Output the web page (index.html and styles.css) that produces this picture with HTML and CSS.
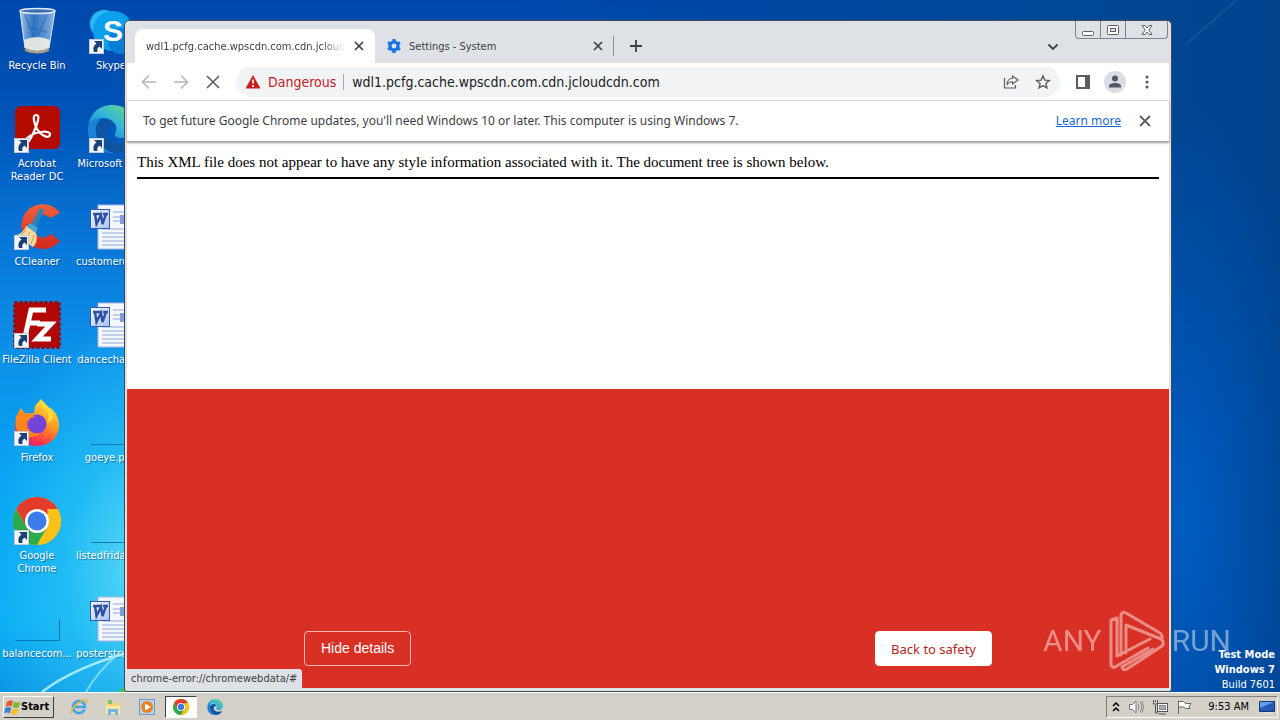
FILE: index.html
```html
<!DOCTYPE html>
<html lang="en">
<head>
    <meta charset="UTF-8">
    <meta name="viewport" content="width=device-width, initial-scale=1.0">
    <title>Desktop</title>
    <link rel="stylesheet" href="styles.css">
</head>
<body>
    <!-- Shared icon parts -->
    <svg class="defs" width="0" height="0" aria-hidden="true">
        <defs>
            <linearGradient id="g-bin" x1="0" x2="1"><stop offset="0" stop-color="#c9dff2" stop-opacity=".85"/><stop offset=".4" stop-color="#5f9cd8" stop-opacity=".5"/><stop offset="1" stop-color="#b8d3ee" stop-opacity=".8"/></linearGradient>
            <linearGradient id="g-edge" x1="0" y1="1" x2="1" y2="0"><stop offset="0" stop-color="#1573c4"/><stop offset=".5" stop-color="#30b4dd"/><stop offset="1" stop-color="#6ee07a"/></linearGradient>
            <linearGradient id="g-fox" x1=".8" y1="0" x2=".3" y2="1"><stop offset="0" stop-color="#fff04a"/><stop offset=".45" stop-color="#ff9a1f"/><stop offset=".8" stop-color="#ff3b47"/><stop offset="1" stop-color="#e3177f"/></linearGradient>
            <linearGradient id="g-word" x1="0" y1="0" x2="1" y2="1"><stop offset="0" stop-color="#f4f8ff"/><stop offset="1" stop-color="#a9c2ee"/></linearGradient>
            <linearGradient id="g-cc" x1="0" y1="0" x2="0" y2="1"><stop offset="0" stop-color="#f0603a"/><stop offset="1" stop-color="#d2281c"/></linearGradient>
            <symbol id="shortcut" viewBox="0 0 15 15">
                <rect x=".5" y=".5" width="14" height="14" fill="#f4f6f8" stroke="#c3cad2"/>
                <path d="M5 2h8v8l-2.500-2.500C8 9 8 11 8.500 13H5C3.500 9 5 6.500 7.500 4.500z" fill="#1a4078"/>
            </symbol>
            <symbol id="word" viewBox="0 0 48 48">
                <path d="M11 2h33v44H11z" fill="#f4f7fd" stroke="#a5b7dc"/>
                <path d="M26 9h14M26 14h14M26 18h14M15 26h27M15 30h27M15 34h27M15 38h27M15 42h27" stroke="#8fa8dc"/>
                <rect x="33" y="12" width="9" height="9" fill="#7f9edb"/>
                <rect x="3.500" y="6.500" width="19" height="19" fill="url(#g-word)" stroke="#3458ab"/>
                <path d="M6 11h5M10 11h5M16 11h5M8 11l1.500 10L14 12l1.500 9L19 11" fill="none" stroke="#2b50a4" stroke-width="2.400"/>
            </symbol>
            <symbol id="chrome" viewBox="0 0 48 48">
                <circle cx="24" cy="24" r="24" fill="#fbc116"/>
                <path d="M24 24 44.800 12A24 24 0 0 0 3.200 12L13.600 30z" fill="#e33b2e"/>
                <path d="M3.200 12A24 24 0 0 0 24 48L34.400 30 24 24l-10.400 6z" fill="#2da94f"/>
                <path d="M24 48 34.400 30V12h10.400A24 24 0 0 1 24 48z" fill="#fbc116"/>
                <circle cx="24" cy="24" r="12" fill="#fff"/>
                <circle cx="24" cy="24" r="9.500" fill="#3b7ded"/>
            </symbol>
            <symbol id="edge" viewBox="0 0 48 48">
                <path d="M1 23C2 9 12 0 25 0c14 0 23 9 23 20 0 8-6 13-13 13-5 0-8-2-7-5 1-2 2-4 1-7-2-5-7-8-13-8C8 13 2 17 1 23z" fill="url(#g-edge)"/>
                <path d="M1 23c1-6 7-10 15-10-5 2-8 8-7 15 1 10 10 18 20 20C12 50 0 39 1 23z" fill="#1b83d6"/>
                <path d="M9 28c-1-7 3-12 9-13 5 0 9 2 10 6-5-1-8 3-8 7 0 8 11 13 22 9 2-1 3 0 2 2-4 6-10 9-17 9C17 46 10 37 9 28z" fill="#0d55a3"/>
            </symbol>
            <symbol id="close" viewBox="0 0 16 16"><path d="M4 4l8 8M12 4l-8 8" stroke="currentColor" stroke-width="1.700"/></symbol>
        </defs>
    </svg>

    <main class="desktop">
        <!-- Wallpaper light streaks -->
        <svg class="streaks" viewBox="0 0 130 110" aria-hidden="true">
            <path d="M42 110C65 92 95 80 130 70" stroke="#b7f3ff" stroke-width="2.500" fill="none" opacity=".85"/>
            <path d="M86 110C94 96 104 84 118 72" stroke="#9feaff" stroke-width="2" fill="none" opacity=".7"/>
            <path d="M117 110l13-10v10z" fill="#3fc46a"/>
        </svg>
        <svg class="streaks top" viewBox="0 0 130 110" aria-hidden="true">
            <path d="M35 45L90-3" stroke="#5b8fc4" stroke-width="2" opacity=".2"/>
        </svg>

        <!-- Desktop icons -->
        <div class="shortcuts">
            <div class="shortcut">
                <svg viewBox="0 0 48 48"><path d="M7 4l5 37q12 7 24 0l6-37z" fill="url(#g-bin)"/><path d="M11 33q13-6 26 0l-1 8q-12 6-24 0z" fill="#f1eee6" opacity=".9"/><path d="M12 8l9 22M34 8l-9 20M14 20l20 5" stroke="#245fa8" opacity=".4" fill="none" stroke-width="2"/><path d="M7 4l5 37M42 4l-6 37" stroke="#d8e8f8" fill="none"/><path d="M12 41q12 6 24 0v3q-12 5-24 0z" fill="#b49f86"/><ellipse cx="24.500" cy="4" rx="17.500" ry="2.500" fill="#3b70b4" stroke="#dfeaf5" stroke-width="1.500"/></svg>
                <span>Recycle Bin</span>
            </div>
            <div class="shortcut">
                <svg viewBox="0 0 48 48"><circle cx="17" cy="17" r="14" fill="#28b8f2"/><circle cx="26" cy="24" r="20" fill="#0aa0ec"/><circle cx="34" cy="34" r="13" fill="#087ed6"/><text x="26" y="34" class="skype-letter">S</text><use href="#shortcut" x="2" y="32" width="15" height="15"/></svg>
                <span>Skype</span>
            </div>
            <div class="shortcut">
                <svg viewBox="0 0 48 48"><rect x="2" y="1" width="45" height="43" rx="6" fill="#b30b00"/><path d="M23 10c-4 0-2 8 1 14 4 7 12 10 13 6 1-5-13-4-20 1-6 4-9 9-6 9 5 0 10-13 13-21 2-6 2-9-1-9z" fill="none" stroke="#fff" stroke-width="2.200"/><use href="#shortcut" x="1" y="33" width="15" height="15"/></svg>
                <span>Acrobat Reader DC</span>
            </div>
            <div class="shortcut nowrap">
                <svg viewBox="0 0 48 48"><use href="#edge" width="48" height="48"/><use href="#shortcut" x="2" y="33" width="15" height="15"/></svg>
                <span>Microsoft Edg</span>
            </div>
            <div class="shortcut">
                <svg viewBox="0 0 48 48"><path d="M47 10C40-1 22-2 13 9c-8 10-5 27 6 34 9 5 20 4 28-5l-9-7c-4 4-10 5-14 1-5-5-5-13 0-18 4-3 9-3 13 1z" fill="url(#g-cc)"/><path d="M27 5l4 2-8 18-5-3z" fill="#2d83b8"/><path d="M17 20l8 5-2 5-10-6z" fill="#47a4d5"/><path d="M13 23l10 7c2 6 0 12-3 14L3 32c5-1 8-4 10-9z" fill="#f2d9a0"/><path d="M8 32l5-5M13 37l4-8M18 41l3-9" stroke="#c99d54"/><use href="#shortcut" x="1" y="32" width="15" height="15"/></svg>
                <span>CCleaner</span>
            </div>
            <div class="shortcut nowrap">
                <svg viewBox="0 0 48 48"><use href="#word" width="48" height="48"/></svg>
                <span>customercol...</span>
            </div>
            <div class="shortcut">
                <svg viewBox="0 0 48 48"><rect x="1.500" y="1.500" width="45" height="45" fill="#b20606" stroke="#8d0d14" stroke-width="3" stroke-dasharray="3 2"/><path d="M12 36l6-27h15M14 22h13M24 23h14L24 38h14" fill="none" stroke="#fff" stroke-width="5"/><use href="#shortcut" x="1" y="32" width="15" height="15"/></svg>
                <span>FileZilla Client</span>
            </div>
            <div class="shortcut nowrap">
                <svg viewBox="0 0 48 48"><use href="#word" width="48" height="48"/></svg>
                <span>dancechard...</span>
            </div>
            <div class="shortcut">
                <svg viewBox="0 0 48 48"><path d="M8 9l4 6 9-1 1-7 6-7 4 7c9 2 14 10 14 19 0 12-9 21-22 21S2 38 2 27C2 20 4 14 8 9z" fill="url(#g-fox)"/><circle cx="24" cy="25" r="9.500" fill="#7443d7"/><path d="M3 17c7-5 16-4 19 1-6 0-5 4-9 5 0 9 8 13 15 11-8 7-21 5-25-5z" fill="#ff8a1c" opacity=".9"/><path d="M28 0c-1 5 1 7 5 10 4 4 3 10 1 14 6-2 7-7 5-12z" fill="#ffdc38"/><use href="#shortcut" x="1" y="32" width="15" height="15"/></svg>
                <span>Firefox</span>
            </div>
            <div class="shortcut nowrap">
                <svg viewBox="0 0 48 48"><path d="M4 45.500h44" stroke="#1378ab"/></svg>
                <span>goeye.png</span>
            </div>
            <div class="shortcut">
                <svg viewBox="0 0 48 48"><use href="#chrome" width="48" height="48"/><use href="#shortcut" x="1" y="33" width="15" height="15"/></svg>
                <span>Google Chrome</span>
            </div>
            <div class="shortcut nowrap">
                <svg viewBox="0 0 48 48"><path d="M4 45.500h44" stroke="#1378ab"/></svg>
                <span>listedfridays...</span>
            </div>
            <div class="shortcut nowrap">
                <svg viewBox="0 0 48 48"><path d="M2 45.500h44.500V24" stroke="#0877b8" fill="none"/></svg>
                <span>balancecom...</span>
            </div>
            <div class="shortcut nowrap">
                <svg viewBox="0 0 48 48"><use href="#word" width="48" height="48"/></svg>
                <span>posterstrust...</span>
            </div>
        </div>

        <!-- Browser window -->
        <section class="window">
            <div class="title-bar">
                <div class="tab active">
                    <span class="tab-title">wdl1.pcfg.cache.wpscdn.com.cdn.jcloudcdn.com</span>
                    <button class="icon-button small" aria-label="Close tab"><svg width="16" height="16"><use href="#close"/></svg></button>
                </div>
                <div class="tab">
                    <svg class="favicon" viewBox="0 0 16 16"><circle cx="8" cy="8" r="4" fill="none" stroke="#1a73e8" stroke-width="3.200"/><path d="M8 1v3M8 12v3M2 4.500l2.500 1.500M11.500 10l2.500 1.500M2 11.500L4.500 10M11.500 6L14 4.500" stroke="#1a73e8" stroke-width="3.200"/></svg>
                    <span class="tab-title">Settings - System</span>
                    <button class="icon-button small" aria-label="Close tab"><svg width="16" height="16"><use href="#close"/></svg></button>
                </div>
                <button class="icon-button new-tab" aria-label="New tab"><svg width="16" height="16"><path d="M8 2v12M2 8h12" stroke="currentColor" stroke-width="1.800"/></svg></button>
                <button class="icon-button tab-search" aria-label="Search tabs"><svg width="16" height="16"><path d="M3.500 5.500L8 10l4.500-4.500" fill="none" stroke="currentColor" stroke-width="1.800"/></svg></button>
                <div class="window-buttons">
                    <button aria-label="Minimize"><svg width="14" height="14"><rect x="1.500" y="8.500" width="11" height="4" rx="1" fill="#fff" stroke="#5b6068"/></svg></button>
                    <button aria-label="Restore"><svg width="14" height="14"><rect x="1.500" y="2.500" width="11" height="9" rx="1" fill="#fff" stroke="#5b6068"/><rect x="4.500" y="5.500" width="5" height="3" fill="#dee1e6" stroke="#5b6068"/></svg></button>
                    <button class="wide" aria-label="Close"><svg width="14" height="14"><path d="M2 2.500h3L7 5l2-2.500h3L8.800 7l3.200 4.500H9L7 9l-2 2.500H2L5.200 7z" fill="#fff" stroke="#5b6068"/></svg></button>
                </div>
            </div>

            <div class="toolbar">
                <button class="icon-button faded" aria-label="Back"><svg width="16" height="16"><path d="M15 8H2M8 1.500L1.500 8 8 14.500" fill="none" stroke="currentColor" stroke-width="1.600"/></svg></button>
                <button class="icon-button faded" aria-label="Forward"><svg width="16" height="16"><path d="M1 8h13M8 1.500L14.500 8 8 14.500" fill="none" stroke="currentColor" stroke-width="1.600"/></svg></button>
                <button class="icon-button" aria-label="Stop"><svg width="16" height="16"><path d="M2 2l12 12M14 2L2 14" stroke="currentColor" stroke-width="1.600"/></svg></button>
                <div class="address">
                    <svg width="16" height="16"><path d="M8 1l7.500 13.500H.5z" fill="#c5221f"/><path d="M8 5.500v4M8 11v2" stroke="#fff" stroke-width="1.600"/></svg>
                    <label class="danger" for="url">Dangerous</label>
                    <input id="url" type="text" value="wdl1.pcfg.cache.wpscdn.com.cdn.jcloudcdn.com">
                    <button class="icon-button" aria-label="Share"><svg width="16" height="16" fill="none" stroke="currentColor"><path d="M1.500 4v10h11v-3" stroke-width="1.200"/><path d="M9.500 2L15 6l-5.500 4V7.800C7 7.800 5 8.800 4 11c0-4 2.500-6.500 5.500-6.800z" stroke-width="1.100"/></svg></button>
                    <button class="icon-button" aria-label="Bookmark"><svg width="16" height="16"><path d="M8 2l1.800 4.100 4.500.4-3.400 3 1 4.400L8 11.600l-3.900 2.300 1-4.400-3.400-3 4.500-.4z" fill="none" stroke="currentColor" stroke-width="1.400"/></svg></button>
                </div>
                <button class="icon-button" aria-label="Side panel"><svg width="16" height="16"><path d="M1 1h14v14H1zM3 3v10h7V3z" fill="currentColor" fill-rule="evenodd"/></svg></button>
                <button class="icon-button" aria-label="Profile"><svg width="22" height="22"><circle cx="11" cy="11" r="11" fill="#dadde3"/><circle cx="11" cy="7.500" r="3" fill="#4d5768"/><path d="M5 16.500v-1.500c0-2 3-3 6-3s6 1 6 3v1.500z" fill="#4d5768"/></svg></button>
                <button class="icon-button" aria-label="Menu"><svg width="16" height="16" fill="currentColor"><circle cx="8" cy="3" r="1.600"/><circle cx="8" cy="8" r="1.600"/><circle cx="8" cy="13" r="1.600"/></svg></button>
            </div>

            <div class="infobar">
                <span>To get future Google Chrome updates, you'll need Windows 10 or later. This computer is using Windows 7.</span>
                <a href="#">Learn more</a>
                <button class="icon-button" aria-label="Dismiss"><svg width="16" height="16"><path d="M3 3l10 10M13 3L3 13" stroke="currentColor" stroke-width="1.800"/></svg></button>
            </div>

            <div class="page">
                <div class="xml-view">
                    <p>This XML file does not appear to have any style information associated with it. The document tree is shown below.</p>
                </div>
                <div class="warning">
                    <div class="warning-actions">
                        <button class="details">Hide details</button>
                        <button class="safety">Back to safety</button>
                    </div>
                </div>
                <div class="status">chrome-error://chromewebdata/#</div>
            </div>
        </section>

        <!-- Overlays -->
        <div class="watermark">
            <span>ANY</span>
            <svg width="58" height="62" viewBox="0 0 58 62" fill="none" stroke="currentColor" stroke-width="3" stroke-linejoin="round" stroke-linecap="round"><path d="M9 8L3 10v45q1 3 4 2l33-19M9 8v38M13 45V5q1-4 5-2l34 20q4 4 1 6L18 15M18 15v28M9 46l33-17M53 29q4 3 1 7L19 59q-4 2-5-2l31-18"/></svg>
            <span>RUN</span>
        </div>
        <div class="build-info">
            <b>Test Mode</b>
            <b>Windows 7</b>
            <span>Build 7601</span>
        </div>
    </main>

    <!-- Taskbar -->
    <footer class="taskbar">
        <button class="start"><svg width="17" height="16"><path d="M3 3q3-3 6-1L7.500 7.500Q4.500 6 1.500 8z" fill="#e8562a"/><path d="M10 2.500q3 2 6.500 0L15 8q-3 2-6.500 0z" fill="#7db83a"/><path d="M1.200 9q3-2 6 0L5.700 14.500q-3-2-5.700 0z" fill="#3a82d6"/><path d="M8.200 9.300q3 2 6.500 0L13 14.800q-3 2-6.300 0z" fill="#f5bf2b"/></svg>Start</button>
        <button class="task" aria-label="Internet Explorer"><svg viewBox="0 0 18 18"><path d="M14.500 11.500A6 6 0 1 1 15 9H5" fill="none" stroke="#3fa6e3" stroke-width="2.600"/><path d="M2 15.500C-1 12 9 2 15.500 2c2 0 1.500 2 .5 3.500" fill="none" stroke="#e6b73a" stroke-width="1.500"/></svg></button>
        <button class="task" aria-label="Explorer"><svg viewBox="0 0 18 18"><path d="M2 3h6l1 2h7v11H2z" fill="#f3d676"/><path d="M4 2h4v4H4z" fill="#7cc36a"/><path d="M2 8h14v8H2z" fill="#f9e7a4"/><path d="M4 17v-6h10v6h-3v-3H7v3z" fill="#6db4e4"/></svg></button>
        <button class="task" aria-label="Media Player"><svg viewBox="0 0 18 18"><rect x="1.500" y="1.500" width="15" height="15" fill="#b7d4ee" stroke="#6f9cc6"/><circle cx="9" cy="9" r="6" fill="#f2811d"/><path d="M7 5.500l6 3.500-6 3.500z" fill="#fff"/></svg></button>
        <button class="task running" aria-label="Google Chrome"><svg viewBox="0 0 18 18"><use href="#chrome" x="1" y="1" width="16" height="16"/></svg></button>
        <button class="task" aria-label="Microsoft Edge"><svg viewBox="0 0 18 18"><use href="#edge" x="1" y="1" width="16" height="16"/></svg></button>
        <div class="tray">
            <svg width="8" height="10"><path d="M1 4l3-3 3 3M1 9l3-3 3 3" fill="none" stroke="#000" stroke-width="1.500"/></svg>
            <svg width="16" height="16" fill="none" stroke="#777"><path d="M1.500 5.500h3L8 2v12l-3.500-3.500h-3z" fill="#fff"/><path d="M10 5q2 3 0 6M12 3q3.500 5 0 10M14 2q3 6 0 12" stroke="#888"/></svg>
            <svg width="16" height="16" stroke="#555" fill="#fff"><rect x="5.500" y="4.500" width="10" height="8"/><rect x="7.500" y="6.500" width="6" height="4" fill="#aaa" stroke="#888"/><path d="M7 15h7M3.500 6v8h3M1.500 1v4h4V1M3.500 1v2" fill="none"/></svg>
            <svg width="16" height="16" stroke="#666" fill="#fff"><path d="M2.500 15V1.500M2.500 2.500h5l2 2h5.500l-2 3 1 2h-4.500l-2-1.500h-5"/></svg>
            <time>9:53 AM</time>
            <svg width="16" height="14"><path d="M.5 1.500h15v10H.5z" fill="#2459b8" stroke="#19376e"/><path d="M1 2h14L1 8z" fill="#5f9fe6"/><path d="M4 13h8" stroke="#eee"/></svg>
        </div>
    </footer>
</body>
</html>
```
FILE: styles.css
```css
/* General page styling */
* {
    box-sizing: border-box;
}

body {
    display: flex;
    flex-direction: column;
    height: 100vh;
    margin: 0;
    overflow: hidden;
    font-family: 'DejaVu Sans Condensed', 'DejaVu Sans', sans-serif;
    font-size: 11px;
    line-height: 13px;
}

button {
    margin: 0;
    padding: 0;
    border: none;
    background: none;
    color: inherit;
    font: inherit;
}

svg {
    flex: none;
}

.defs {
    position: absolute;
}

/* Desktop and wallpaper */
.desktop {
    position: relative;
    flex: 1;
    overflow: hidden;
    background:
        radial-gradient(ellipse 170px 260px at 150px 570px, #5fdcf6 0%, rgba(50, 200, 245, 0.6) 50%, transparent 100%),
        radial-gradient(ellipse 140px 420px at 1180px 520px, #005cc2 0%, transparent 100%),
        linear-gradient(90deg, transparent 40%, #004795 85%, #00428c 100%),
        linear-gradient(#0048ac 0%, #0054b8 17%, #0877d8 35%, #0c92ea 52%, #06a4f2 72%, #08acf4 90%, #0a94e4 100%);
}

.streaks {
    position: absolute;
    left: 0;
    bottom: 0;
    width: 130px;
    height: 110px;
}

.streaks.top {
    top: 0;
    right: 0;
    left: auto;
}

.shortcuts {
    display: grid;
    grid-template-columns: 74px 74px;
    grid-auto-rows: 98px;
    width: 148px;
    padding-top: 7px;
}

.shortcut {
    display: flex;
    flex-direction: column;
    align-items: center;
    gap: 4px;
    color: #fff;
    text-align: center;
    text-shadow: 1px 1px 1px rgba(0, 30, 80, 0.5);
}

.shortcut svg {
    width: 48px;
    height: 48px;
}

.nowrap {
    white-space: nowrap;
}

.skype-letter {
    font: bold 30px 'Liberation Sans', sans-serif;
    fill: #fff;
    text-anchor: middle;
    text-shadow: none;
}

/* Browser window */
.window {
    position: absolute;
    top: 20px;
    right: 108px;
    bottom: 0;
    left: 124px;
    display: flex;
    flex-direction: column;
    padding: 0 2px 3px;
    border: 1px solid #3f4a57;
    border-radius: 5px 5px 3px 3px;
    background: #dee1e6;
    color: #3c4043;
}

.title-bar {
    display: flex;
    align-items: flex-end;
    height: 42px;
    padding-left: 8px;
}

.tab {
    display: flex;
    align-items: center;
    width: 238px;
    height: 34px;
    padding: 0 7px 0 11px;
}

.tab.active {
    width: 240px;
    padding-right: 8px;
    border-radius: 8px 8px 0 0;
    background: #fff;
}

.tab-title {
    flex: 1;
    overflow: hidden;
    white-space: nowrap;
}

.active .tab-title {
    margin-right: 6px;
    mask-image: linear-gradient(90deg, #000 88%, transparent);
}

.favicon {
    width: 16px;
    height: 16px;
    margin-right: 7px;
}

.icon-button {
    display: flex;
    flex: none;
    align-items: center;
    justify-content: center;
    width: 32px;
    height: 32px;
    color: #5a5d61;
}

.icon-button.small {
    width: 16px;
    color: #3c4043;
}

.icon-button.faded {
    color: #b4b6b8;
}

.icon-button.new-tab {
    width: 44px;
    height: 20px;
    margin-bottom: 7px;
    border-left: 1px solid #8b8e93;
    color: #3c4043;
}

.tab-search {
    margin-right: 6px;
    margin-left: auto;
    color: #3c4043;
}

.window-buttons {
    display: flex;
    align-self: flex-start;
    margin-right: 1px;
    border: 1px solid #7d828b;
    border-top: none;
    border-radius: 0 0 4px 4px;
}

.window-buttons button {
    display: flex;
    align-items: center;
    justify-content: center;
    width: 25px;
    height: 17px;
    border-right: 1px solid #7d828b;
}

.window-buttons .wide {
    width: 41px;
    border-right: none;
}

/* Toolbar */
.toolbar {
    display: flex;
    align-items: center;
    height: 38px;
    padding: 0 6px;
    border-bottom: 1px solid #dadce0;
    background: #fff;
}

.address {
    display: flex;
    flex: 1;
    align-items: center;
    height: 30px;
    margin: 0 7px;
    padding: 0 1px 0 9px;
    border-radius: 15px;
    background: #f1f3f4;
    font-size: 14px;
    line-height: 16px;
}

.danger {
    margin-left: 7px;
    padding-right: 7px;
    border-right: 1px solid #a6a8ab;
    color: #c5221f;
}

.address input {
    flex: 1;
    min-width: 0;
    padding: 0 0 0 8px;
    border: none;
    outline: none;
    background: none;
    color: #202124;
    font: inherit;
}

/* Update notice */
.infobar {
    position: relative;
    z-index: 1;
    display: flex;
    align-items: center;
    height: 41px;
    padding: 0 8px 0 16px;
    border-bottom: 1px solid #a9a9a9;
    background: #fff;
    box-shadow: 0 1px 2px rgba(0, 0, 0, 0.4);
    font: 12px/16px 'Noto Sans', sans-serif;
}

.infobar a {
    margin-right: 8px;
    margin-left: auto;
    color: #1967d2;
}

/* Page content */
.page {
    position: relative;
    display: flex;
    flex: 1;
    flex-direction: column;
    background: #fff;
}

.xml-view {
    flex: 1;
    padding: 10px;
}

.xml-view p {
    margin: 0;
    padding-bottom: 5px;
    border-bottom: 2px solid #000;
    color: #000;
    font: 15px/20px 'Liberation Serif', serif;
}

.warning {
    padding: 242px 24px 22px;
    background: #d93025;
}

.warning-actions {
    display: flex;
    justify-content: space-between;
    max-width: 688px;
    margin: 0 auto;
}

.warning-actions button {
    height: 35px;
    padding: 0 15px;
    border: 1px solid #f3b9b4;
    border-radius: 4px;
    color: #fff;
    font-size: 14px;
}

.warning-actions .details {
    padding: 0 16px;
    font-family: 'Liberation Sans', sans-serif;
}

.warning-actions .safety {
    border-color: #fff;
    background: #fff;
    color: #b3261e;
    font: 13px 'Noto Sans', sans-serif;
}

.status {
    position: absolute;
    bottom: 0;
    left: 0;
    padding: 3px 5px 3px 4px;
    border-radius: 0 3px 0 0;
    background: #dee1e6;
}

/* Overlays */
.build-info {
    position: absolute;
    right: 5px;
    bottom: 0;
    display: flex;
    flex-direction: column;
    align-items: flex-end;
    color: #fff;
    line-height: 15px;
}

.watermark {
    position: absolute;
    right: 49px;
    bottom: 20px;
    display: flex;
    align-items: center;
    gap: 6px;
    color: #fff;
    opacity: 0.45;
    font: 30px/62px Roboto, sans-serif;
}

/* Taskbar */
.taskbar {
    display: flex;
    align-items: center;
    height: 28px;
    padding: 0 2px 0 3px;
    border-top: 1px solid #fff;
    background: #d4d0c8;
    color: #000;
}

.start {
    display: flex;
    align-items: center;
    width: 51px;
    height: 22px;
    margin-right: 9px;
    border: 1px solid;
    border-color: #fff #404040 #404040 #fff;
    font-weight: bold;
}

.task {
    display: flex;
    align-items: center;
    justify-content: center;
    width: 32px;
    height: 22px;
    margin-right: 2px;
}

.task svg {
    width: 18px;
    height: 18px;
}

.task.running {
    border: 1px solid;
    border-color: #404040 #fff #fff #404040;
    background: #fff;
}

.tray {
    display: flex;
    align-items: center;
    gap: 8px;
    height: 22px;
    margin-left: auto;
    padding: 0 2px 0 5px;
    border: 1px solid;
    border-color: #808080 #fff #fff #808080;
}

.tray time {
    margin: 0 2px 0 8px;
}
```
